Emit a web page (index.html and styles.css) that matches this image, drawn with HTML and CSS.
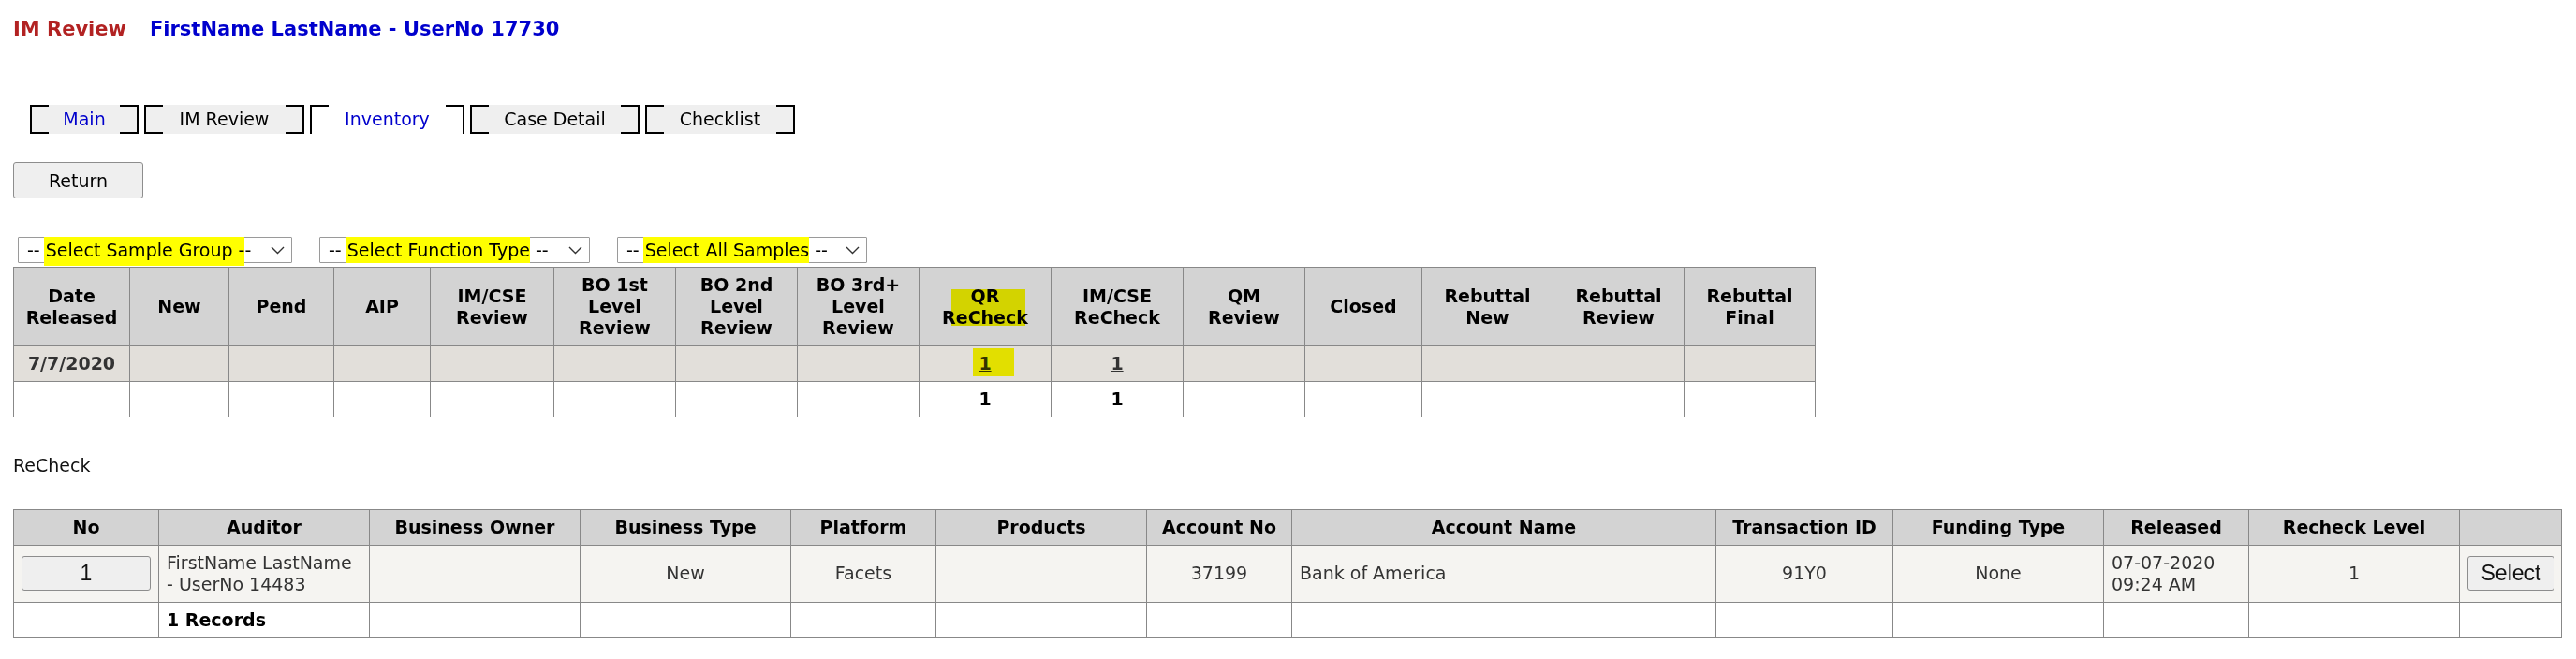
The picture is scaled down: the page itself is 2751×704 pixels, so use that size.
FILE: index.html
```html
<!DOCTYPE html>
<html lang="en">
<head>
    <meta charset="UTF-8">
    <title>IM Review - Inventory</title>
    <link rel="stylesheet" href="styles.css">
</head>
<body>
    <div class="page-title">
        <span class="app-name">IM Review</span><span class="user-name">FirstName LastName - UserNo 17730</span>
    </div>

    <div class="tabs">
        <a class="tab tab-main tab-link">Main</a>
        <a class="tab tab-review">IM Review</a>
        <a class="tab tab-inventory tab-active tab-link">Inventory</a>
        <a class="tab tab-case">Case Detail</a>
        <a class="tab tab-check">Checklist</a>
    </div>

    <button class="return-btn">Return</button>

    <div class="filters">
        <div class="dropdown dd-group">
            <span class="dd-text">-- <span class="hl hl-group">Select Sample Group -</span>-</span>
            <svg class="chev" width="15" height="9" viewBox="0 0 15 9"><polyline points="1,1 7.5,7.5 14,1" fill="none" stroke="#333" stroke-width="1.4"/></svg>
        </div>
        <div class="dropdown dd-function">
            <span class="dd-text">-- <span class="hl">Select Function Type</span> --</span>
            <svg class="chev" width="15" height="9" viewBox="0 0 15 9"><polyline points="1,1 7.5,7.5 14,1" fill="none" stroke="#333" stroke-width="1.4"/></svg>
        </div>
        <div class="dropdown dd-samples">
            <span class="dd-text">-- <span class="hl">Select All Samples</span> --</span>
            <svg class="chev" width="15" height="9" viewBox="0 0 15 9"><polyline points="1,1 7.5,7.5 14,1" fill="none" stroke="#333" stroke-width="1.4"/></svg>
        </div>
    </div>

    <table class="grid summary">
        <colgroup>
            <col><col><col><col><col><col><col><col><col><col><col><col><col><col><col>
        </colgroup>
        <tr>
            <th>Date<br>Released</th>
            <th>New</th>
            <th>Pend</th>
            <th>AIP</th>
            <th>IM/CSE<br>Review</th>
            <th>BO 1st<br>Level<br>Review</th>
            <th>BO 2nd<br>Level<br>Review</th>
            <th>BO 3rd+<br>Level<br>Review</th>
            <th class="marked">QR<br>ReCheck<span class="marker marker-head"></span></th>
            <th>IM/CSE<br>ReCheck</th>
            <th>QM<br>Review</th>
            <th>Closed</th>
            <th>Rebuttal<br>New</th>
            <th>Rebuttal<br>Review</th>
            <th>Rebuttal<br>Final</th>
        </tr>
        <tr class="date-row">
            <td class="date">7/7/2020</td>
            <td></td><td></td><td></td><td></td><td></td><td></td><td></td>
            <td class="marked"><a href="#">1</a><span class="marker marker-count"></span></td>
            <td><a href="#">1</a></td>
            <td></td><td></td><td></td><td></td><td></td>
        </tr>
        <tr class="total-row">
            <td></td><td></td><td></td><td></td><td></td><td></td><td></td><td></td>
            <td>1</td>
            <td>1</td>
            <td></td><td></td><td></td><td></td><td></td>
        </tr>
    </table>

    <p class="section-label">ReCheck</p>

    <table class="grid recheck">
        <colgroup>
            <col><col><col><col><col><col><col><col><col><col><col><col><col>
        </colgroup>
        <tr>
            <th>No</th>
            <th><a href="#">Auditor</a></th>
            <th><a href="#">Business Owner</a></th>
            <th>Business Type</th>
            <th><a href="#">Platform</a></th>
            <th>Products</th>
            <th>Account No</th>
            <th>Account Name</th>
            <th>Transaction ID</th>
            <th><a href="#">Funding Type</a></th>
            <th><a href="#">Released</a></th>
            <th>Recheck Level</th>
            <th></th>
        </tr>
        <tr class="item-row">
            <td><button class="row-no">1</button></td>
            <td class="left">FirstName LastName<br>- UserNo 14483</td>
            <td></td>
            <td>New</td>
            <td>Facets</td>
            <td></td>
            <td>37199</td>
            <td class="left">Bank of America</td>
            <td>91Y0</td>
            <td>None</td>
            <td class="left">07-07-2020<br>09:24 AM</td>
            <td>1</td>
            <td><button class="select-btn">Select</button></td>
        </tr>
        <tr class="footer-row">
            <td></td>
            <td class="left records">1 Records</td>
            <td></td><td></td><td></td><td></td><td></td><td></td><td></td><td></td><td></td><td></td><td></td>
        </tr>
    </table>
</body>
</html>
```

FILE: styles.css
```css
body{
    margin: 0;
    padding: 0 14px;
    font-family: "DejaVu Sans", Verdana, sans-serif;
    font-size: 19px;
    line-height: 23.5px;
    color: #000;
    background: #fff;
}

/* header line */
.page-title{
    margin-top: 19px;
    font-size: 21px;
    line-height: 25px;
    font-weight: bold;
}
.app-name{
    color: #b22222;
}
.user-name{
    color: #0000cd;
    margin-left: 25px;
}

/* tabs with corner brackets */
.tabs{
    display: flex;
    gap: 6px;
    margin: 68px 0 0 18px;
}
.tab{
    box-sizing: border-box;
    height: 31px;
    line-height: 31px;
    text-align: center;
    color: #000;
    text-decoration: none;
    border-left: 2px solid #000;
    border-right: 2px solid #000;
    background:
        linear-gradient(#000, #000) left top / 18px 2px no-repeat,
        linear-gradient(#000, #000) right top / 18px 2px no-repeat,
        linear-gradient(#000, #000) left bottom / 18px 2px no-repeat,
        linear-gradient(#000, #000) right bottom / 18px 2px no-repeat,
        #efefef;
}
.tab-link{
    color: #0000cc;
}
.tab-active{
    background:
        linear-gradient(#000, #000) left top / 18px 2px no-repeat,
        linear-gradient(#000, #000) right top / 18px 2px no-repeat,
        #fff;
}
.tab-main{ width: 116px; }
.tab-review{ width: 171px; }
.tab-inventory{ width: 165px; }
.tab-case{ width: 181px; }
.tab-check{ width: 160px; }

.return-btn{
    display: block;
    margin-top: 30px;
    width: 139px;
    height: 39px;
    padding: 0;
    font-family: inherit;
    font-size: 19px;
    color: #000;
    background: #efefef;
    border: 1px solid #8d8d8d;
    border-radius: 3px;
}

/* filter dropdowns */
.filters{
    display: flex;
    gap: 29px;
    margin-top: 41px;
    padding-left: 5px;
}
.dropdown{
    display: flex;
    align-items: center;
    box-sizing: border-box;
    height: 28px;
    line-height: 26px;
    padding: 0 7px 0 9px;
    border: 1px solid #9a9a9a;
    border-radius: 1px;
    background: #fff;
    white-space: nowrap;
}
.dd-group{ width: 293px; }
.dd-function{ width: 289px; }
.dd-samples{ width: 267px; }
.chev{
    margin-left: auto;
}
.hl{
    background: #ffff00;
    padding: 3px 0 3px 2px;
    margin-left: -2px;
}
.hl-group{
    padding-bottom: 6px;
}

/* tables */
.grid{
    border-collapse: collapse;
    table-layout: fixed;
    line-height: 23px;
}
.grid th, .grid td{
    border: 1px solid #888;
    padding: 7px 8px;
    vertical-align: middle;
    text-align: center;
}
.grid th{
    background: #d3d3d3;
    font-weight: bold;
}
.grid a{
    color: inherit;
    text-decoration: underline;
}

.summary{
    width: 1924px;
    margin-top: 4px;
}
.summary col:nth-child(1){ width: 124px; }
.summary col:nth-child(2){ width: 106px; }
.summary col:nth-child(3){ width: 112px; }
.summary col:nth-child(4){ width: 103px; }
.summary col:nth-child(5){ width: 132px; }
.summary col:nth-child(6){ width: 130px; }
.summary col:nth-child(7){ width: 130px; }
.summary col:nth-child(8){ width: 130px; }
.summary col:nth-child(9){ width: 141px; }
.summary col:nth-child(10){ width: 141px; }
.summary col:nth-child(11){ width: 130px; }
.summary col:nth-child(12){ width: 125px; }
.summary col:nth-child(13){ width: 140px; }
.summary col:nth-child(14){ width: 140px; }
.summary col:nth-child(15){ width: 140px; }

.date-row td{
    background: #e2dfda;
    color: #333;
    font-weight: bold;
}
.total-row td{
    font-weight: bold;
}

.marked{
    position: relative;
}
.marker{
    position: absolute;
    background: #ffff00;
    mix-blend-mode: multiply;
}
.marker-head{
    left: 34px;
    top: 23px;
    width: 79px;
    height: 39px;
}
.marker-count{
    left: 57px;
    top: 2px;
    width: 44px;
    height: 30px;
}

.section-label{
    margin: 40px 0 0;
    color: #111;
}

.recheck{
    width: 2721px;
    margin-top: 34px;
}
.recheck col:nth-child(1){ width: 155px; }
.recheck col:nth-child(2){ width: 225px; }
.recheck col:nth-child(3){ width: 225px; }
.recheck col:nth-child(4){ width: 225px; }
.recheck col:nth-child(5){ width: 155px; }
.recheck col:nth-child(6){ width: 225px; }
.recheck col:nth-child(7){ width: 155px; }
.recheck col:nth-child(8){ width: 453px; }
.recheck col:nth-child(9){ width: 189px; }
.recheck col:nth-child(10){ width: 225px; }
.recheck col:nth-child(11){ width: 155px; }
.recheck col:nth-child(12){ width: 225px; }
.recheck col:nth-child(13){ width: 109px; }

.recheck td.left{
    text-align: left;
}
.item-row td{
    background: #f5f4f1;
    color: #333;
}
.records{
    font-weight: bold;
}

.row-no, .select-btn{
    box-sizing: border-box;
    height: 37px;
    padding: 0;
    font-family: "Liberation Sans", Arial, sans-serif;
    font-size: 23px;
    color: #111;
    background: #efefef;
    border: 1px solid #8d8d8d;
    border-radius: 3px;
    vertical-align: middle;
}
.row-no{
    width: 100%;
}
.select-btn{
    width: 93px;
}
```
